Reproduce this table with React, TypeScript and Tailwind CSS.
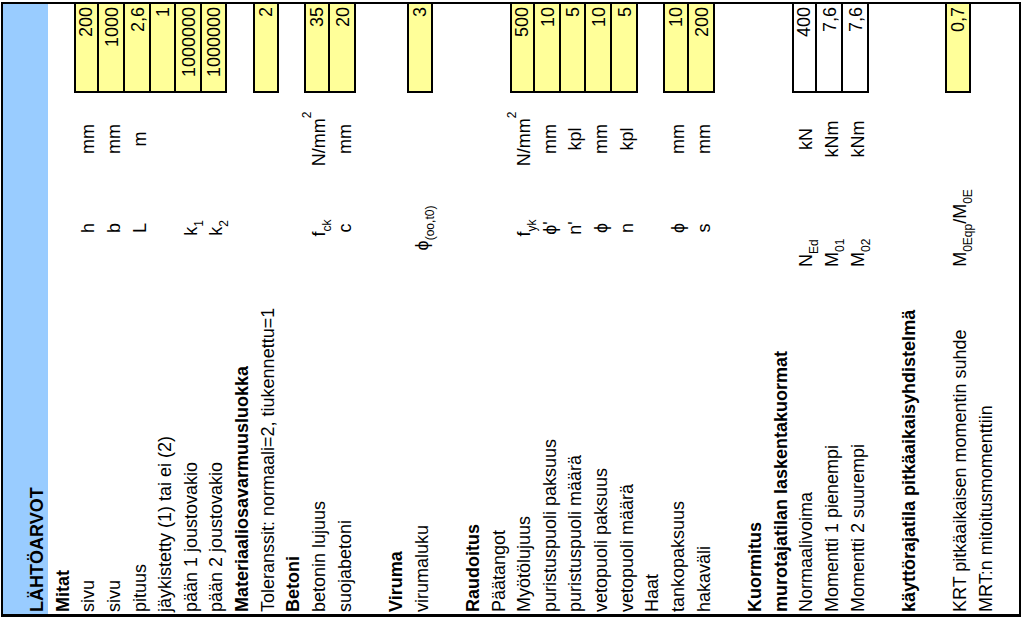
import React from "react";

type Row = {
  label?: React.ReactNode;
  bold?: boolean;
  sym?: React.ReactNode;
  symLeft?: boolean;
  unit?: React.ReactNode;
  value?: string;
  white?: boolean;
};

const Sub = ({ children }: { children: React.ReactNode }) => (
  <sub className="text-[12px] align-[-3px] leading-none">{children}</sub>
);
const Sup = ({ children }: { children: React.ReactNode }) => (
  <sup className="text-[12px] align-[8px] leading-none">{children}</sup>
);

const N2 = (
  <span>
    N/mm<Sup>2</Sup>
  </span>
);

const rows: Row[] = [
  { label: "Mitat", bold: true },
  { label: "sivu", sym: "h", unit: "mm", value: "200" },
  { label: "sivu", sym: "b", unit: "mm", value: "1000" },
  { label: "pituus", sym: "L", unit: "m", value: "2,6" },
  { label: "jäykistetty (1) tai ei (2)", value: "1" },
  { label: "pään 1 joustovakio", sym: <span>k<Sub>1</Sub></span>, value: "1000000" },
  { label: "pään 2 joustovakio", sym: <span>k<Sub>2</Sub></span>, value: "1000000" },
  { label: "Materiaaliosavarmuusluokka", bold: true },
  { label: "Toleranssit: normaali=2, tiukennettu=1", value: "2" },
  { label: "Betoni", bold: true },
  { label: "betonin lujuus", sym: <span>f<Sub>ck</Sub></span>, unit: N2, value: "35" },
  { label: "suojabetoni", sym: "c", unit: "mm", value: "20" },
  {},
  { label: "Viruma", bold: true },
  { label: "virumaluku", sym: <span>ϕ<Sub>(oo,t0)</Sub></span>, value: "3" },
  {},
  { label: "Raudoitus", bold: true },
  { label: "Päätangot" },
  { label: "Myötölujuus", sym: <span>f<Sub>yk</Sub></span>, unit: N2, value: "500" },
  { label: "puristuspuoli paksuus", sym: "ϕ'", unit: "mm", value: "10" },
  { label: "puristuspuoli määrä", sym: "n'", unit: "kpl", value: "5" },
  { label: "vetopuoli paksuus", sym: "ϕ", unit: "mm", value: "10" },
  { label: "vetopuoli määrä", sym: "n", unit: "kpl", value: "5" },
  { label: "Haat" },
  { label: "tankopaksuus", sym: "ϕ", unit: "mm", value: "10" },
  { label: "hakaväli", sym: "s", unit: "mm", value: "200" },
  {},
  { label: "Kuormitus", bold: true },
  { label: "murotajatilan laskentakuormat", bold: true },
  { label: "Normaalivoima", sym: <span>N<Sub>Ed</Sub></span>, symLeft: true, unit: "kN", value: "400", white: true },
  { label: "Momentti 1 pienempi", sym: <span>M<Sub>01</Sub></span>, symLeft: true, unit: "kNm", value: "7,6", white: true },
  { label: "Momentti 2 suurempi", sym: <span>M<Sub>02</Sub></span>, symLeft: true, unit: "kNm", value: "7,6", white: true },
  {},
  { label: "käyttörajatila pitkäaikaisyhdistelmä", bold: true },
  {},
  {
    label: "KRT pitkäaikaisen momentin suhde",
    sym: (
      <span>
        M<Sub>0Eqp</Sub>/M<Sub>0E</Sub>
      </span>
    ),
    unit: "",
    value: "0,7",
  },
  { label: "MRT:n mitoitusmomenttiin" },
];

export default function App() {
  return (
    <div className="w-[1024px] h-[619px] overflow-hidden bg-white">
      <div className="w-[619px] h-[1024px] origin-top-left translate-y-[619px] -rotate-90 pl-[2px] pt-[1px] font-['Liberation_Sans',Arial,sans-serif] text-[18px] text-black">
        <div className="w-[615px] h-[1020px] border-2 border-l-[3px] border-black flex flex-col">
          <div className="h-[45px] shrink-0 bg-[#99ccff] flex items-end pl-[2px] font-bold leading-[22px]">
            LÄHTÖARVOT
          </div>
          {rows.map((r, i) => {
            const prevHasValue = i > 0 && !!rows[i - 1].value;
            return (
              <div key={i} className="h-[25.65px] shrink-0 flex items-end">
                <div
                  className={`w-[336px] shrink-0 pl-[2px] whitespace-nowrap leading-[22px] ${
                    r.bold ? "font-bold" : ""
                  }`}
                >
                  {r.label}
                </div>
                <div
                  className={`w-[100px] shrink-0 whitespace-nowrap leading-[22px] ${
                    r.symLeft ? "text-left pl-[11px]" : "text-center"
                  }`}
                >
                  {r.sym}
                </div>
                <div className="w-[78px] shrink-0 text-center whitespace-nowrap leading-[22px]">
                  {r.unit}
                </div>
                <div className="w-[7px] shrink-0" />
                {r.value ? (
                  <div
                    className={`w-[89px] shrink-0 self-stretch flex items-end justify-end pr-[3px] border-l-2 border-b-2 border-black leading-[22px] ${
                      prevHasValue ? "" : "border-t-2"
                    } ${r.white ? "bg-white" : "bg-[#ffff99]"}`}
                  >
                    {r.value}
                  </div>
                ) : (
                  <div className="w-[89px] shrink-0" />
                )}
              </div>
            );
          })}
        </div>
      </div>
    </div>
  );
}
